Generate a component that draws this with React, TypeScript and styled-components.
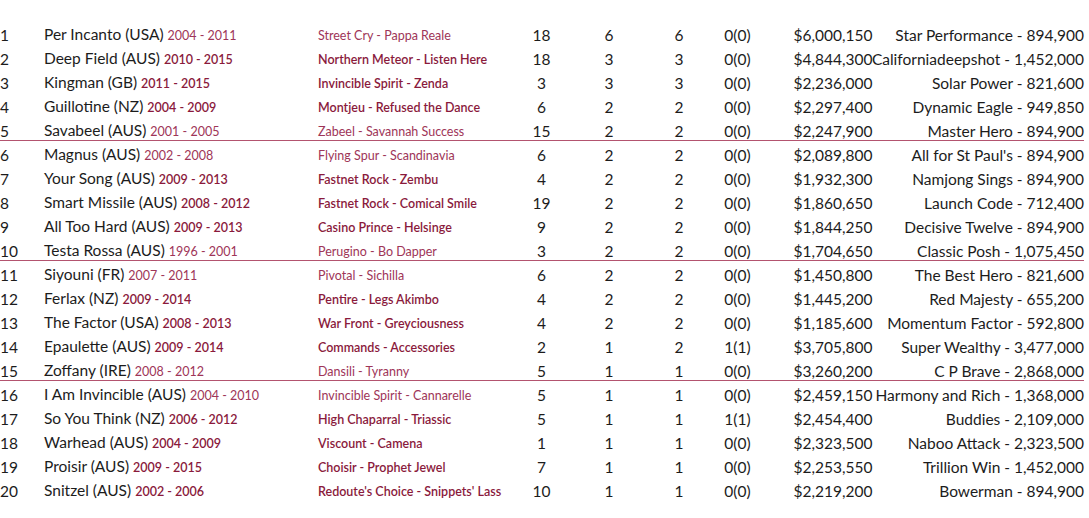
import React from "react";
import styled, { createGlobalStyle } from "styled-components";

const GlobalStyle = createGlobalStyle`
  html, body { margin: 0; padding: 0; background: #ffffff; }
  body { font-family: Lato, "Liberation Sans", sans-serif; color: #1c1c1c; }
`;

type Sire = {
  rank: number;
  name: string;
  years: string;
  parents: string;
  starters: number;
  winners: number;
  stakes: number;
  group: string;
  earnings: string;
  leader: string;
};

const data: Sire[] = [
  { rank: 1, name: "Per Incanto (USA)", years: "2004 - 2011", parents: "Street Cry - Pappa Reale", starters: 18, winners: 6, stakes: 6, group: "0(0)", earnings: "$6,000,150", leader: "Star Performance - 894,900" },
  { rank: 2, name: "Deep Field (AUS)", years: "2010 - 2015", parents: "Northern Meteor - Listen Here", starters: 18, winners: 3, stakes: 3, group: "0(0)", earnings: "$4,844,300", leader: "Californiadeepshot - 1,452,000" },
  { rank: 3, name: "Kingman (GB)", years: "2011 - 2015", parents: "Invincible Spirit - Zenda", starters: 3, winners: 3, stakes: 3, group: "0(0)", earnings: "$2,236,000", leader: "Solar Power - 821,600" },
  { rank: 4, name: "Guillotine (NZ)", years: "2004 - 2009", parents: "Montjeu - Refused the Dance", starters: 6, winners: 2, stakes: 2, group: "0(0)", earnings: "$2,297,400", leader: "Dynamic Eagle - 949,850" },
  { rank: 5, name: "Savabeel (AUS)", years: "2001 - 2005", parents: "Zabeel - Savannah Success", starters: 15, winners: 2, stakes: 2, group: "0(0)", earnings: "$2,247,900", leader: "Master Hero - 894,900" },
  { rank: 6, name: "Magnus (AUS)", years: "2002 - 2008", parents: "Flying Spur - Scandinavia", starters: 6, winners: 2, stakes: 2, group: "0(0)", earnings: "$2,089,800", leader: "All for St Paul's - 894,900" },
  { rank: 7, name: "Your Song (AUS)", years: "2009 - 2013", parents: "Fastnet Rock - Zembu", starters: 4, winners: 2, stakes: 2, group: "0(0)", earnings: "$1,932,300", leader: "Namjong Sings - 894,900" },
  { rank: 8, name: "Smart Missile (AUS)", years: "2008 - 2012", parents: "Fastnet Rock - Comical Smile", starters: 19, winners: 2, stakes: 2, group: "0(0)", earnings: "$1,860,650", leader: "Launch Code - 712,400" },
  { rank: 9, name: "All Too Hard (AUS)", years: "2009 - 2013", parents: "Casino Prince - Helsinge", starters: 9, winners: 2, stakes: 2, group: "0(0)", earnings: "$1,844,250", leader: "Decisive Twelve - 894,900" },
  { rank: 10, name: "Testa Rossa (AUS)", years: "1996 - 2001", parents: "Perugino - Bo Dapper", starters: 3, winners: 2, stakes: 2, group: "0(0)", earnings: "$1,704,650", leader: "Classic Posh - 1,075,450" },
  { rank: 11, name: "Siyouni (FR)", years: "2007 - 2011", parents: "Pivotal - Sichilla", starters: 6, winners: 2, stakes: 2, group: "0(0)", earnings: "$1,450,800", leader: "The Best Hero - 821,600" },
  { rank: 12, name: "Ferlax (NZ)", years: "2009 - 2014", parents: "Pentire - Legs Akimbo", starters: 4, winners: 2, stakes: 2, group: "0(0)", earnings: "$1,445,200", leader: "Red Majesty - 655,200" },
  { rank: 13, name: "The Factor (USA)", years: "2008 - 2013", parents: "War Front - Greyciousness", starters: 4, winners: 2, stakes: 2, group: "0(0)", earnings: "$1,185,600", leader: "Momentum Factor - 592,800" },
  { rank: 14, name: "Epaulette (AUS)", years: "2009 - 2014", parents: "Commands - Accessories", starters: 2, winners: 1, stakes: 2, group: "1(1)", earnings: "$3,705,800", leader: "Super Wealthy - 3,477,000" },
  { rank: 15, name: "Zoffany (IRE)", years: "2008 - 2012", parents: "Dansili - Tyranny", starters: 5, winners: 1, stakes: 1, group: "0(0)", earnings: "$3,260,200", leader: "C P Brave - 2,868,000" },
  { rank: 16, name: "I Am Invincible (AUS)", years: "2004 - 2010", parents: "Invincible Spirit - Cannarelle", starters: 5, winners: 1, stakes: 1, group: "0(0)", earnings: "$2,459,150", leader: "Harmony and Rich - 1,368,000" },
  { rank: 17, name: "So You Think (NZ)", years: "2006 - 2012", parents: "High Chaparral - Triassic", starters: 5, winners: 1, stakes: 1, group: "1(1)", earnings: "$2,454,400", leader: "Buddies - 2,109,000" },
  { rank: 18, name: "Warhead (AUS)", years: "2004 - 2009", parents: "Viscount - Camena", starters: 1, winners: 1, stakes: 1, group: "0(0)", earnings: "$2,323,500", leader: "Naboo Attack - 2,323,500" },
  { rank: 19, name: "Proisir (AUS)", years: "2009 - 2015", parents: "Choisir - Prophet Jewel", starters: 7, winners: 1, stakes: 1, group: "0(0)", earnings: "$2,253,550", leader: "Trillion Win - 1,452,000" },
  { rank: 20, name: "Snitzel (AUS)", years: "2002 - 2006", parents: "Redoute's Choice - Snippets' Lass", starters: 10, winners: 1, stakes: 1, group: "0(0)", earnings: "$2,219,200", leader: "Bowerman - 894,900" },
];

const lightRows = new Set([1, 5, 6, 10, 11, 15, 16]);
const ruledRows = new Set([5, 10, 15]);

const Table = styled.div`
  width: 1084px;
  padding-top: 21px;
  display: flex;
  flex-direction: column;
`;

const Row = styled.div<{ $ruled: boolean }>`
  display: grid;
  grid-template-columns: 44px 274px 200px 47px 88px 52px 65px 126px 188px;
  align-items: end;
  height: 24px;
  box-shadow: ${(p) => (p.$ruled ? "inset 0 -1px 0 #b3536f" : "none")};
`;

const Cell = styled.div<{ $align?: "left" | "center" | "right" }>`
  font-size: 15.5px;
  line-height: 19px;
  white-space: nowrap;
  text-align: ${(p) => p.$align ?? "left"};
  justify-self: ${(p) => (p.$align === "right" ? "end" : p.$align === "center" ? "center" : "start")};
`;

const Years = styled.span<{ $light: boolean }>`
  font-size: 12.5px;
  color: ${(p) => (p.$light ? "#9e3558" : "#8a1a3c")};
  font-weight: ${(p) => (p.$light ? 400 : 600)};
`;

const Parents = styled(Cell)<{ $light: boolean }>`
  font-size: 12.5px;
  color: ${(p) => (p.$light ? "#9e3558" : "#8a1a3c")};
  font-weight: ${(p) => (p.$light ? 400 : 600)};
`;

export default function App() {
  return (
    <>
      <GlobalStyle />
      <Table>
        {data.map((r) => {
          const light = lightRows.has(r.rank);
          return (
            <Row key={r.rank} $ruled={ruledRows.has(r.rank)}>
              <Cell>{r.rank}</Cell>
              <Cell>
                {r.name} <Years $light={light}>{r.years}</Years>
              </Cell>
              <Parents $light={light}>{r.parents}</Parents>
              <Cell $align="center">{r.starters}</Cell>
              <Cell $align="center">{r.winners}</Cell>
              <Cell $align="center">{r.stakes}</Cell>
              <Cell $align="center">{r.group}</Cell>
              <Cell $align="center">{r.earnings}</Cell>
              <Cell $align="right">{r.leader}</Cell>
            </Row>
          );
        })}
      </Table>
    </>
  );
}
